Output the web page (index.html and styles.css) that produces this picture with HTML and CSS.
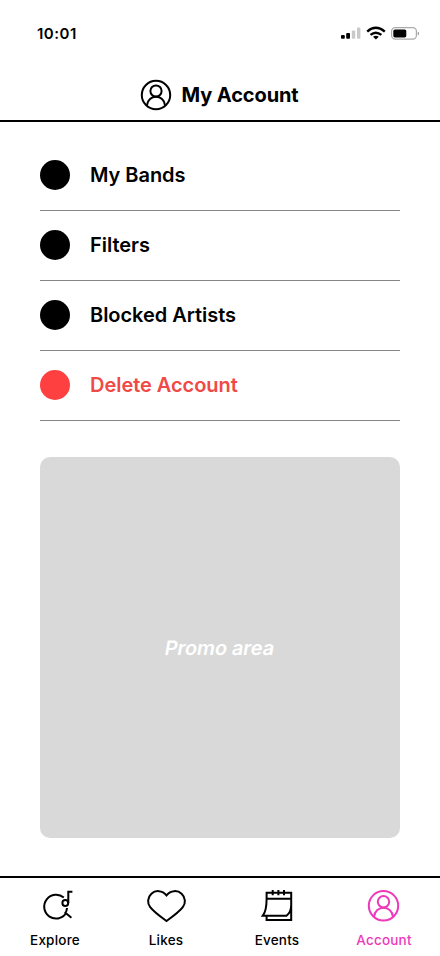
FILE: index.html
```html
<!DOCTYPE html>
<html lang="en">
<head>
<meta charset="utf-8">
<meta name="viewport" content="width=device-width">
<title>My Account</title>
<link rel="stylesheet" href="styles.css">
</head>
<body>
<div class="screen">
  <div class="status">
    <span class="time">10:01</span>
    <svg class="status-icons" width="80" height="14" viewBox="0 0 80 14">
      <rect x="1" y="8.9" width="3.8" height="3.9" rx="1"/>
      <rect x="6.2" y="6.9" width="3.8" height="5.9" rx="1"/>
      <rect class="dim" x="11.8" y="4.4" width="3.4" height="8.4" rx="1"/>
      <rect class="dim" x="17" y="1.6" width="3.4" height="11.2" rx="1"/>
      <path class="wave" d="M27.2 5.6Q35.7-2 44.8 5.6M30.5 8.9Q35.8 4.4 41.4 8.9"/>
      <path d="M33 10.7Q35.9 8.8 38.8 10.7L35.9 13.4Z"/>
      <rect class="battery" x="51.6" y="1.7" width="24.8" height="11.4" rx="3.6"/>
      <rect x="53.3" y="3.4" width="13" height="8" rx="1.6"/>
      <path class="cap" d="M77.8 5.4Q80 7.4 77.8 9.4Z"/>
    </svg>
  </div>
  <header class="header">
    <svg class="line-icon" width="32" height="32" viewBox="0 0 32 32">
      <circle cx="16" cy="16" r="14.2"/>
      <circle cx="16" cy="12" r="5.6"/>
      <path d="M6.8 26.6C8 14.8 24 14.8 25.2 26.6"/>
    </svg>
    <h1>My Account</h1>
  </header>
  <main class="content">
    <ul class="menu">
      <li><i class="dot"></i><span>My Bands</span></li>
      <li><i class="dot"></i><span>Filters</span></li>
      <li><i class="dot"></i><span>Blocked Artists</span></li>
      <li class="danger"><i class="dot"></i><span>Delete Account</span></li>
    </ul>
    <section class="promo"><span class="promo-label">Promo area</span></section>
  </main>
  <nav class="tabs">
    <a class="tab">
      <svg class="line-icon" width="44" height="40" viewBox="0 0 44 40">
        <path d="M30.8 11.6A11.9 11.9 0 1 0 33 27.3M34 22Q34 25 31.8 27.6M33 27.3L38.4 31.8M35.3 17V5.8H39.4"/>
        <circle cx="32.3" cy="17" r="2.9"/>
      </svg>
      <span>Explore</span>
    </a>
    <a class="tab">
      <svg class="line-icon" width="44" height="40" viewBox="0 0 44 40">
        <path d="M22.5 9.4C18.3 4 11.3 4 7.4 7.8C3.4 11.6 3.1 17.1 6.2 21.2C10 26.2 16 30.4 22.5 35C29 30.4 35 26.2 38.8 21.2C41.9 17.1 41.6 11.6 37.6 7.8C33.7 4 26.7 4 22.5 9.4Z"/>
      </svg>
      <span>Likes</span>
    </a>
    <a class="tab">
      <svg class="line-icon" width="44" height="40" viewBox="0 0 44 40">
        <path d="M11.6 12.7V6.7H36.2V34H11.6V30M11.6 12.7H36.2M11.6 12.7C11.6 21 10.7 26 7.8 29.7H31.5C34.5 27.5 36.2 24.5 36.2 19M17.7 4V9.3M23.4 4V9.3M29 4V9.3"/>
      </svg>
      <span>Events</span>
    </a>
    <a class="tab active">
      <svg class="line-icon" width="44" height="40" viewBox="0 0 44 40">
        <circle cx="21.5" cy="19.8" r="14.7"/>
        <circle cx="21.5" cy="15.7" r="5.7"/>
        <path d="M12 30.8C13.2 18.6 29.8 18.6 31 30.8"/>
      </svg>
      <span>Account</span>
    </a>
  </nav>
</div>
</body>
</html>
```
FILE: styles.css
```css
* { box-sizing: border-box; }
body {
  margin: 0;
  background: #fff;
  color: #000;
  font-family: Inter, "Liberation Sans", sans-serif;
}
.screen {
  display: flex;
  flex-direction: column;
  width: 440px;
  height: 956px;
}
.status {
  display: flex;
  justify-content: space-between;
  align-items: center;
  height: 66px;
  padding: 0 20px 0 37px;
}
.time { font-size: 15px; font-weight: 600; letter-spacing: 0.5px; }
.dim { fill: #c9c9c9; }
.wave { fill: none; stroke: #000; stroke-width: 2.4; }
.battery { fill: none; stroke: #aaa; stroke-width: 1.2; }
.cap { fill: #777; }
.header {
  display: flex;
  justify-content: center;
  align-items: center;
  gap: 9px;
  height: 56px;
  padding: 4px 1px 0 0;
  border-bottom: 2px solid #000;
}
h1 {
  margin: 0;
  font-size: 20px;
  font-weight: 700;
  line-height: 24px;
  letter-spacing: -0.1px;
}
.line-icon {
  fill: none;
  stroke: currentColor;
  stroke-width: 2;
  flex: none;
}
.content {
  display: flex;
  flex-direction: column;
  flex: 1;
  padding: 19px 40px 38px;
}
.menu { margin: 0; padding: 0; list-style: none; }
.menu li {
  display: flex;
  align-items: center;
  gap: 20px;
  height: 70px;
  padding-bottom: 1px;
  border-bottom: 1px solid #868686;
  font-size: 20px;
  font-weight: 600;
  letter-spacing: -0.04px;
}
.dot {
  width: 30px;
  height: 30px;
  border-radius: 50%;
  background: #000;
}
.danger { color: #f04a46; }
.danger .dot { background: #ff4040; }
.promo {
  display: flex;
  align-items: center;
  justify-content: center;
  flex: 1;
  margin-top: 36px;
  padding-right: 1px;
  border-radius: 10px;
  background: #d9d9d9;
  color: #fff;
  font-size: 20px;
  font-weight: 600;
}
.promo-label {
  letter-spacing: -0.1px;
  transform: skewX(-10deg);
}
.tabs {
  display: grid;
  grid-template-columns: 110px 112px 110px 104px;
  height: 80px;
  padding-top: 8px;
  border-top: 2px solid #000;
}
.tab {
  display: flex;
  flex-direction: column;
  align-items: center;
  font-size: 13.5px;
  font-weight: 500;
  line-height: 18px;
  letter-spacing: 0.2px;
}
.tab span { margin-top: 5px; }
.active { color: #ec3abb; }
```
